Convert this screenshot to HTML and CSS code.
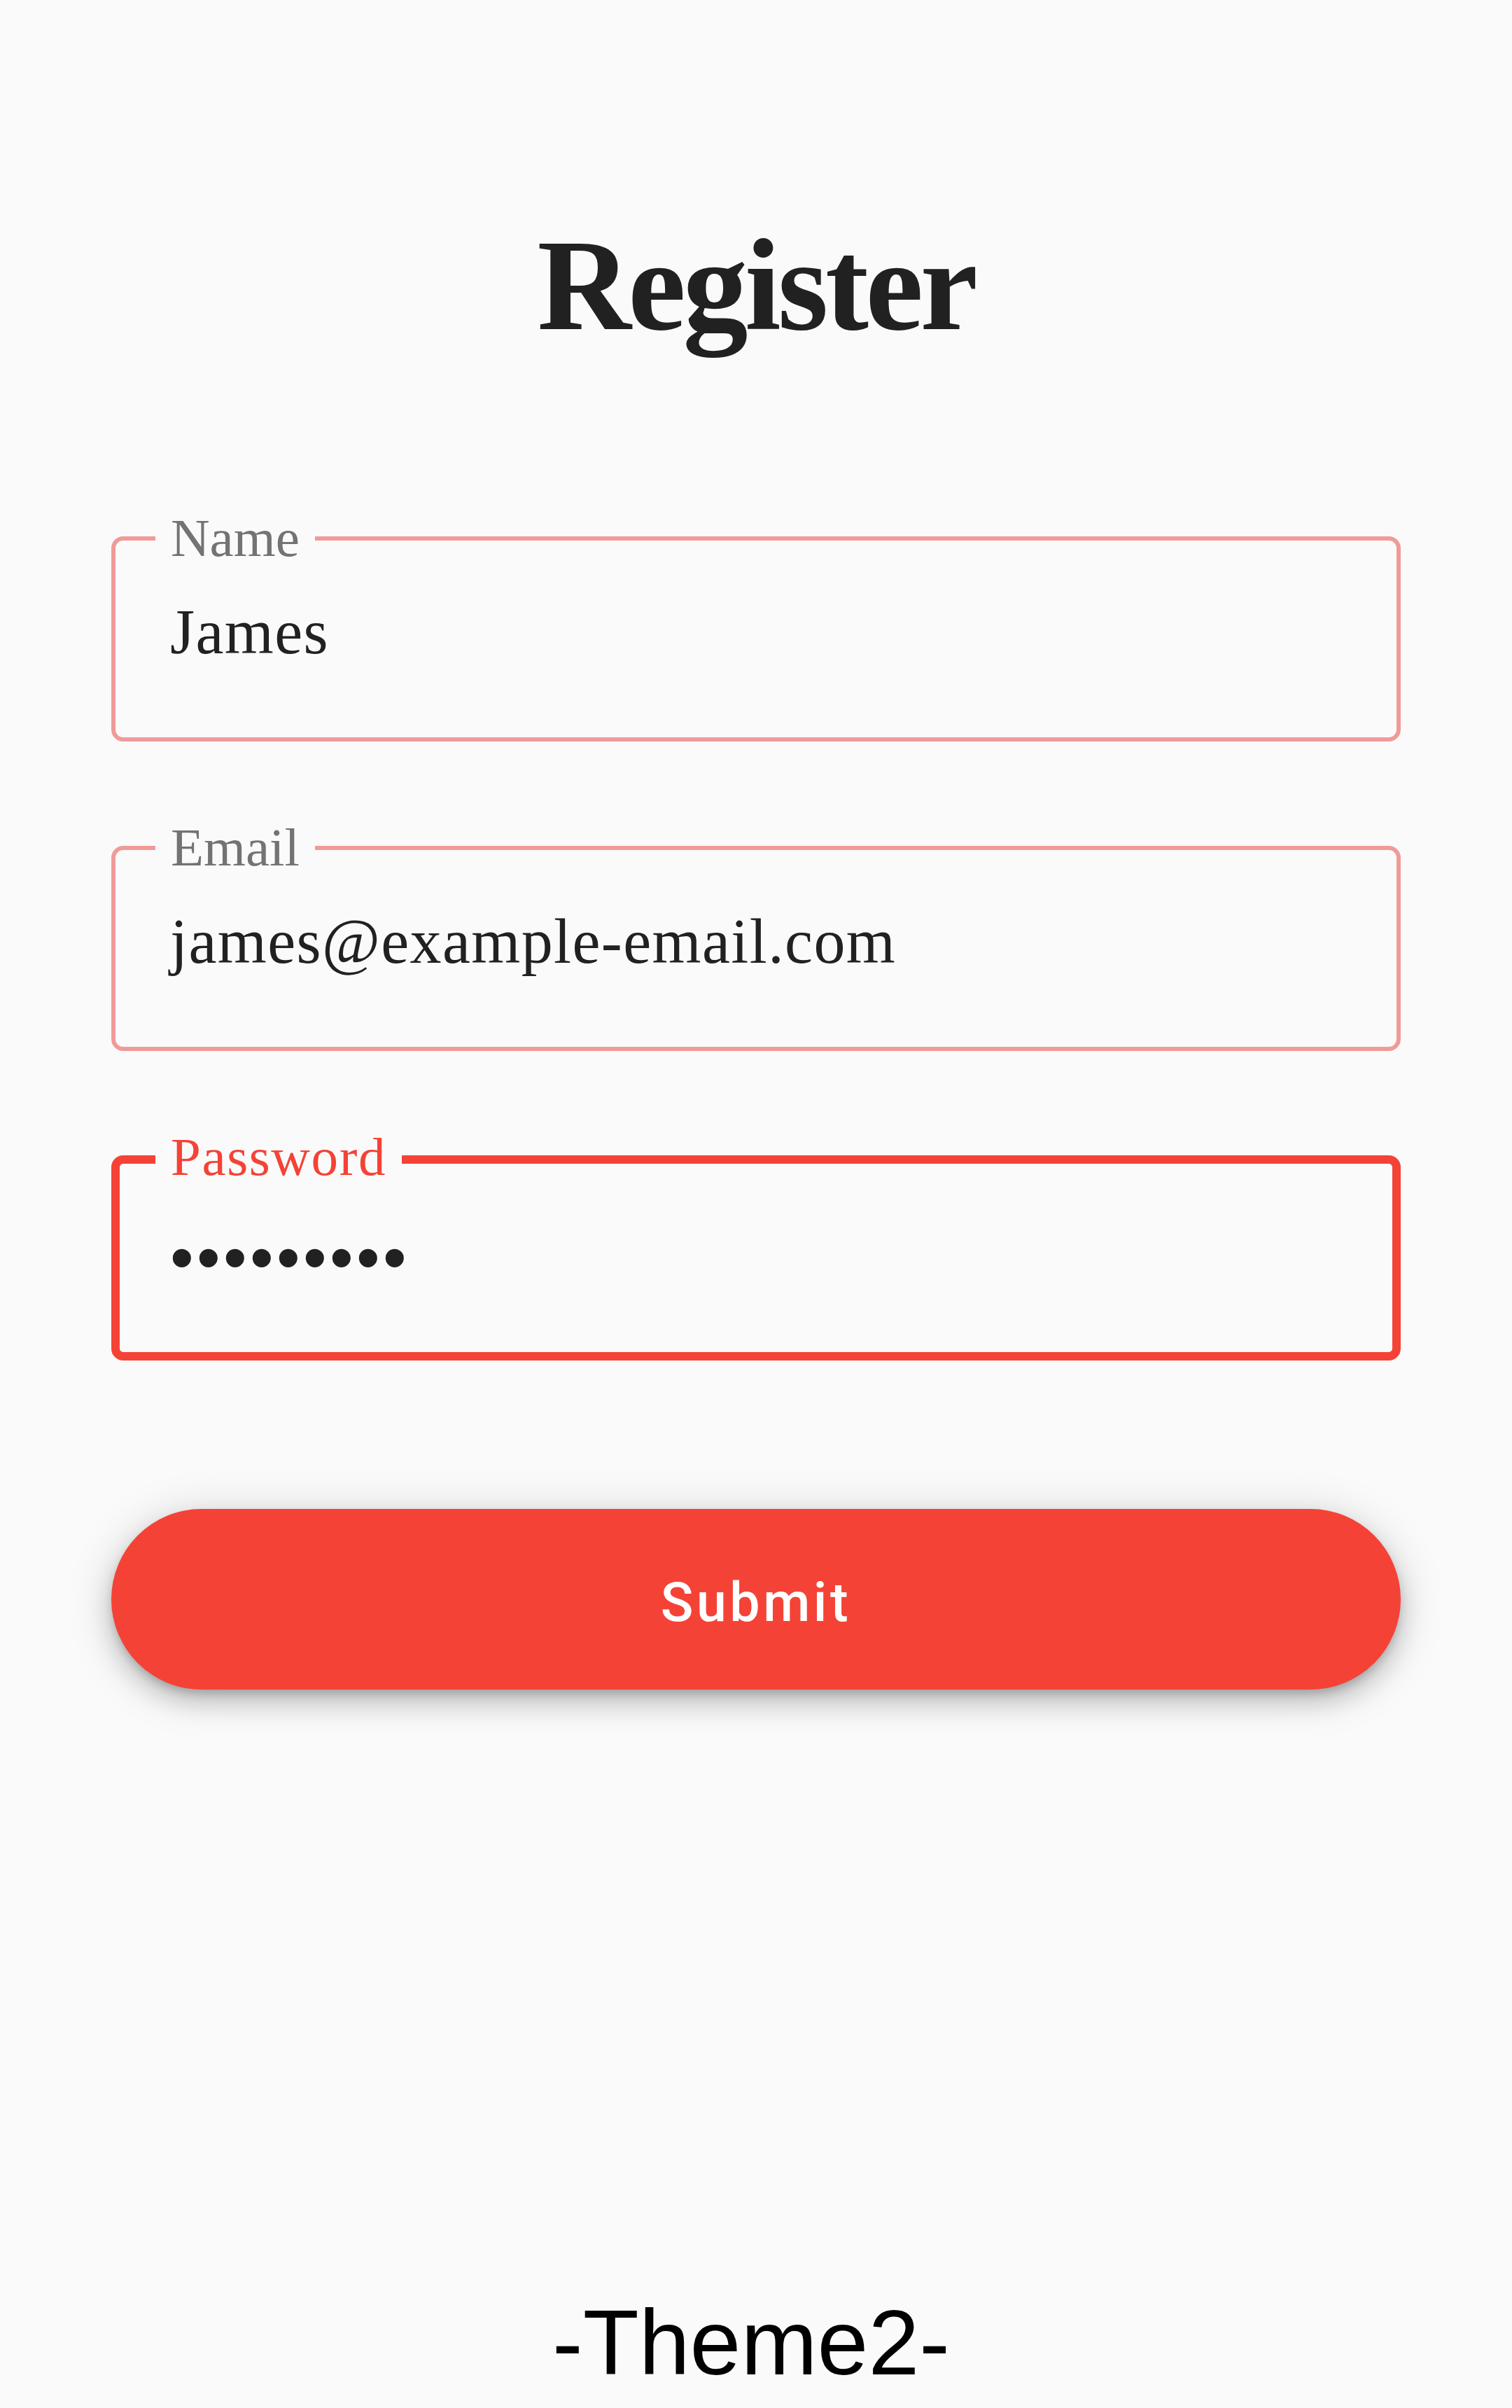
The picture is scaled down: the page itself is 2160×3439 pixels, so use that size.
FILE: index.html
```html
<!DOCTYPE html>
<html lang="en">
<head>
<meta charset="utf-8">
<title>Register</title>
<link rel="stylesheet" href="styles.css">
</head>
<body>
<div class="screen">
  <h1 class="title">Register</h1>
  <form class="form">
    <div class="field">
      <span class="field-label">Name</span>
      <div class="field-value">James</div>
    </div>
    <div class="field">
      <span class="field-label">Email</span>
      <div class="field-value">james@example-email.com</div>
    </div>
    <div class="field field--focused">
      <span class="field-label">Password</span>
      <div class="field-value field-value--password">•••••••••</div>
    </div>
    <button type="button" class="submit">Submit</button>
  </form>
  <div class="caption">-Theme2-</div>
</div>
</body>
</html>
```

FILE: styles.css
```css
html, body {
  margin: 0;
  padding: 0;
  background: #fafafa;
}

.screen {
  width: 2160px;
  min-height: 3439px;
  display: flex;
  flex-direction: column;
  align-items: stretch;
  padding-top: 314px;
  box-sizing: border-box;
}

.title {
  margin: 0;
  font-family: "Liberation Serif", "DejaVu Serif", serif;
  font-weight: 700;
  font-size: 186px;
  line-height: 186px;
  letter-spacing: -4.5px;
  color: #212121;
  text-align: center;
}

.form {
  margin: 266px 0 0;
  padding: 0 159px;
  display: flex;
  flex-direction: column;
  gap: 149px;
}

.field {
  position: relative;
  height: 293px;
  box-sizing: border-box;
  border: 6px solid #f09b99;
  border-radius: 17px;
  padding: 81px 0 0 78px;
}

.field-label {
  position: absolute;
  left: 57px;
  top: -42px;
  padding: 0 22px;
  background: #fafafa;
  font-family: "Liberation Serif", "DejaVu Serif", serif;
  font-size: 77px;
  line-height: 77px;
  color: #737373;
}

.field-value {
  font-family: "Liberation Serif", "DejaVu Serif", serif;
  font-size: 90px;
  line-height: 100px;
  letter-spacing: 1.4px;
  color: #212121;
  white-space: nowrap;
}

.field--focused {
  border-width: 12px;
  border-color: #f44336;
  padding: 84px 0 0 72px;
}

.field--focused .field-label {
  left: 51px;
  top: -48px;
  letter-spacing: 1.6px;
  color: #f44336;
}

.field-value--password {
  font-family: "Liberation Sans", Arial, sans-serif;
  font-size: 96px;
  letter-spacing: 4.4px;
}

.submit {
  margin-top: 63px;
  height: 258px;
  border: none;
  border-radius: 129px;
  background: #f44336;
  color: #ffffff;
  font-family: Roboto, "Liberation Sans", sans-serif;
  font-weight: 500;
  font-size: 77px;
  line-height: 77px;
  letter-spacing: 4.6px;
  padding: 10px 0 0;
  display: flex;
  align-items: center;
  justify-content: center;
  box-shadow: 0 8px 14px -3px rgba(0, 0, 0, 0.2), 0 18px 32px 3px rgba(0, 0, 0, 0.14), 0 8px 60px 8px rgba(0, 0, 0, 0.12);
}

.caption {
  margin-top: 868px;
  padding-right: 14px;
  font-family: "Liberation Sans", Arial, sans-serif;
  font-size: 131px;
  line-height: 130px;
  color: #000000;
  text-align: center;
}
```
